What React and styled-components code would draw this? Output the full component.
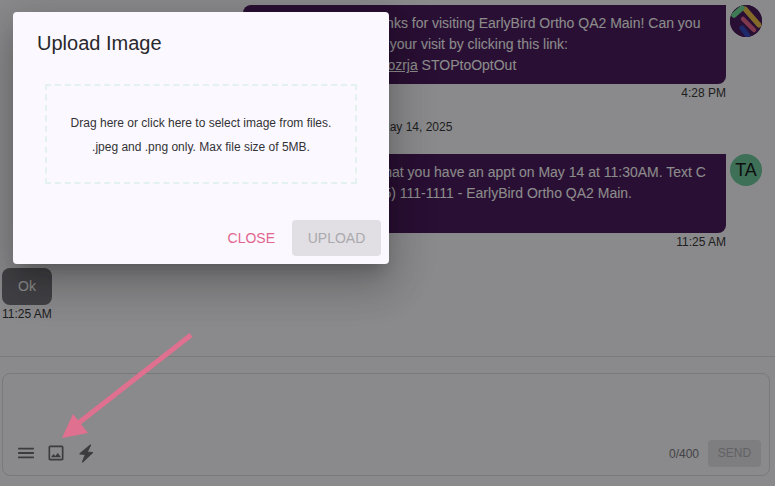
import React from "react";
import styled, { createGlobalStyle } from "styled-components";

const GlobalStyle = createGlobalStyle`
    html, body {
        margin: 0;
        padding: 0;
        height: 100%;
        overflow: hidden;
        background: #fbfbff;
        font-family: "Liberation Sans", Arial, sans-serif;
    }
`;

const Page = styled.div`
    position: relative;
    width: 775px;
    height: 486px;
    display: flex;
    flex-direction: column;
    overflow: hidden;
    background: #fbfbff;
`;

const Messages = styled.div`
    height: 357px;
    box-sizing: border-box;
    padding: 5px 13px 0 2px;
    border-bottom: 1px solid #e0e0e2;
    display: flex;
    flex-direction: column;
`;

const Row = styled.div`
    display: flex;
    justify-content: flex-end;
    gap: 4px;
`;

const Bubble = styled.div`
    width: 483px;
    height: 79px;
    box-sizing: border-box;
    padding: 8px 16px;
    background: #4c1d5d;
    color: #ffffff;
    font-size: 14px;
    line-height: 21px;
    white-space: nowrap;
    border-radius: 8px 0 8px 8px;
    a {
        color: inherit;
    }
`;

const Avatar = styled.div`
    width: 32px;
    height: 32px;
    border-radius: 50%;
    flex-shrink: 0;
    overflow: hidden;
    display: flex;
    align-items: center;
    justify-content: center;
    background: ${(p) => p.$bg};
    color: #1a1a1a;
    font-size: 18px;
`;

const Time = styled.div`
    height: 16px;
    line-height: 16px;
    margin-top: 1px;
    font-size: 12px;
    color: #3a3a3a;
    text-align: ${(p) => (p.$left ? "left" : "right")};
    padding-right: ${(p) => (p.$left ? "0" : "36px")};
`;

const DateLabel = styled.div`
    height: 16px;
    line-height: 16px;
    margin: 18px 0 19px;
    padding-left: 68px;
    font-size: 12px;
    color: #3a3a3a;
    text-align: center;
`;

const Incoming = styled.div`
    width: 50px;
    height: 37px;
    margin-top: 18px;
    box-sizing: border-box;
    padding: 0 16px;
    line-height: 37px;
    font-size: 14px;
    color: #ffffff;
    background: #787880;
    border-radius: 8px;
`;

const Composer = styled.div`
    flex: 1;
    padding: 16px 5px 10px 2px;
    display: flex;
`;

const InputBox = styled.div`
    flex: 1;
    box-sizing: border-box;
    border: 1px solid #dddde0;
    border-radius: 8px;
    padding: 0 8px 8px 11px;
    display: flex;
    align-items: flex-end;
    justify-content: space-between;
`;

const Tools = styled.div`
    display: flex;
    gap: 6px;
    margin-bottom: 2px;
`;

const ToolIcon = styled.svg`
    width: 24px;
    height: 24px;
    fill: #6e6e72;
    display: block;
`;

const Right = styled.div`
    display: flex;
    align-items: center;
    gap: 9px;
`;

const Count = styled.span`
    font-size: 12px;
    color: #7a7a7e;
`;

const SendButton = styled.div`
    width: 53px;
    height: 27px;
    line-height: 27px;
    text-align: center;
    border-radius: 4px;
    font-size: 12px;
    background: #e6e6ea;
    color: #b2b2b6;
`;

const Overlay = styled.div`
    position: absolute;
    inset: 0;
    background: rgba(0, 0, 0, 0.45);
    padding: 12px 0 0 13px;
`;

const Modal = styled.div`
    width: 376px;
    height: 252px;
    box-sizing: border-box;
    background: #fbf9ff;
    border-radius: 4px;
    box-shadow: 0 11px 15px -7px rgba(0, 0, 0, 0.2),
        0 24px 38px 3px rgba(0, 0, 0, 0.14),
        0 9px 46px 8px rgba(0, 0, 0, 0.12);
    padding: 20px 8px 8px 24px;
    display: flex;
    flex-direction: column;
`;

const Title = styled.div`
    font-size: 20px;
    line-height: 23px;
    color: #29282c;
`;

const DropZone = styled.div`
    width: 312px;
    height: 100px;
    box-sizing: border-box;
    margin: 29px 0 0 8px;
    padding-top: 2px;
    border: 2px dashed #e3f1ef;
    display: flex;
    flex-direction: column;
    align-items: center;
    justify-content: center;
    font-size: 12px;
    line-height: 24px;
    color: #333236;
`;

const Actions = styled.div`
    margin-top: auto;
    display: flex;
    justify-content: flex-end;
    align-items: center;
    gap: 17px;
`;

const CloseButton = styled.div`
    font-size: 14px;
    color: #e0668e;
`;

const UploadButton = styled.div`
    width: 89px;
    height: 36px;
    line-height: 36px;
    text-align: center;
    font-size: 14px;
    border-radius: 4px;
    background: #e1dfe3;
    color: #aaa9ad;
`;

const ArrowLayer = styled.svg`
    position: absolute;
    inset: 0;
    pointer-events: none;
`;

function Logo() {
    return (
        <svg width="32" height="32" viewBox="0 0 32 32">
            <rect width="32" height="32" fill="#4c1d5d" />
            <line x1="15" y1="4" x2="29" y2="20" stroke="#f0c24c" strokeWidth="5" strokeLinecap="round" />
            <line x1="4" y1="10" x2="12" y2="3" stroke="#72de9a" strokeWidth="5.5" strokeLinecap="round" />
            <line x1="13" y1="14" x2="24" y2="25" stroke="#e8688f" strokeWidth="4.5" strokeLinecap="round" />
            <line x1="12" y1="23" x2="18" y2="31" stroke="#354cc3" strokeWidth="5" strokeLinecap="round" />
        </svg>
    );
}

export default function App() {
    return (
        <Page>
            <GlobalStyle />
            <Messages>
                <Row>
                    <Bubble>
                        Hi Alexi Testers! Thanks for visiting EarlyBird Ortho QA2 Main! Can you
                        <br />
                        please rate us about your visit by clicking this link:
                        <br />
                        <a href="#survey">https://earlybird.ly/s3ozrja</a> STOPtoOptOut
                    </Bubble>
                    <Avatar $bg="#4c1d5d">
                        <Logo />
                    </Avatar>
                </Row>
                <Time>4:28 PM</Time>
                <DateLabel>May 14, 2025</DateLabel>
                <Row>
                    <Bubble>
                        Hi! Just a reminder that you have an appt on May 14 at 11:30AM. Text C
                        <br />
                        to confirm or tel: (555) 111-1111 - EarlyBird Ortho QA2 Main.
                    </Bubble>
                    <Avatar $bg="#6fcc9f">TA</Avatar>
                </Row>
                <Time>11:25 AM</Time>
                <Incoming>Ok</Incoming>
                <Time $left>11:25 AM</Time>
            </Messages>
            <Composer>
                <InputBox>
                    <Tools>
                        <ToolIcon viewBox="-1.7 -1.7 27.4 27.4">
                            <path d="M3 18h18v-2H3v2zm0-5h18v-2H3v2zm0-7v2h18V6H3z" />
                        </ToolIcon>
                        <ToolIcon viewBox="-2.4 -2.4 28.8 28.8">
                            <path d="M19 5v14H5V5h14m0-2H5c-1.1 0-2 .9-2 2v14c0 1.1.9 2 2 2h14c1.1 0 2-.9 2-2V5c0-1.1-.9-2-2-2zm-4.86 8.86l-3 3.87L9 13.14 6 17h12l-3.86-5.14z" />
                        </ToolIcon>
                        <ToolIcon viewBox="0 0 24 24">
                            <polygon
                                points="16.5,4 6,12.8 11.5,13.4 8.5,21 18.5,11.5 13.2,11"
                                stroke="#6e6e72"
                                strokeWidth="1.2"
                                strokeLinejoin="round"
                            />
                        </ToolIcon>
                    </Tools>
                    <Right>
                        <Count>0/400</Count>
                        <SendButton>SEND</SendButton>
                    </Right>
                </InputBox>
            </Composer>
            <Overlay>
                <Modal>
                    <Title>Upload Image</Title>
                    <DropZone>
                        <div>Drag here or click here to select image from files.</div>
                        <div>.jpeg and .png only. Max file size of 5MB.</div>
                    </DropZone>
                    <Actions>
                        <CloseButton>CLOSE</CloseButton>
                        <UploadButton>UPLOAD</UploadButton>
                    </Actions>
                </Modal>
            </Overlay>
            <ArrowLayer width="775" height="486" viewBox="0 0 775 486">
                <line x1="191" y1="335" x2="76" y2="425" stroke="#e0708f" strokeWidth="5" />
                <polygon points="62,438 73,414 88,433" fill="#e0708f" />
            </ArrowLayer>
        </Page>
    );
}
